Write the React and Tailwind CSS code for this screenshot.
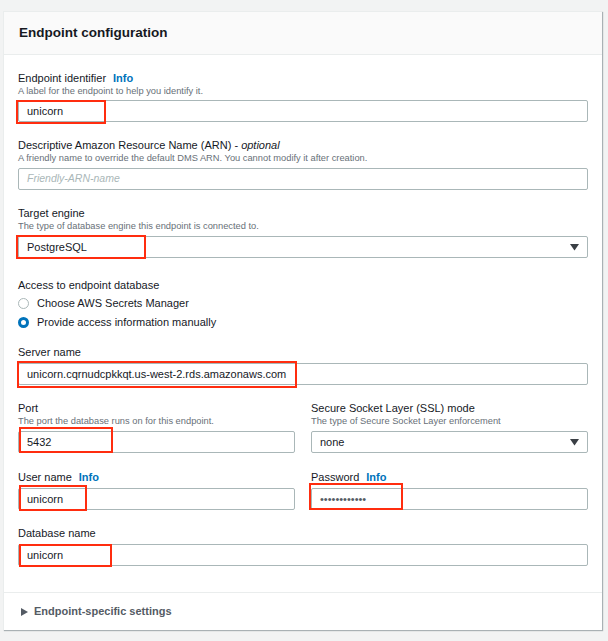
const font = "font-['Liberation_Sans',Arial,sans-serif]";

function Label({ children, info }) {
  return (
    <div className="h-[14px] leading-[14px] text-[11px] text-[#16191f]">
      {children}
      {info && <span className="ml-[7px] font-bold text-[#0073bb]">Info</span>}
    </div>
  );
}

function Desc({ children }) {
  return <div className="h-[12px] leading-[12px] text-[9.3px] text-[#687078] whitespace-nowrap">{children}</div>;
}

function Input({ value, placeholder, italic, red, select, dots, tight }) {
  return (
    <div className={`relative ${tight ? 'mt-[3px]' : 'mt-[4px]'} h-[22px] border border-[#aab7b8] rounded-[2px] bg-white flex items-center px-[8px]`}>
      {value ? (
        <span className={`text-[11px] ${dots ? 'text-[#545b64]' : 'text-[#16191f]'}`}>{value}</span>
      ) : (
        <span className={`text-[10.5px] text-[#aab7b8] ${italic ? 'italic' : ''}`}>{placeholder}</span>
      )}
      {select && (
        <svg className="ml-auto" width="9" height="7" viewBox="0 0 9 7">
          <polygon points="0,0 9,0 4.5,6.5" fill="#3a3f45" />
        </svg>
      )}
      {red && <div className={`absolute border-2 border-[#ff2d0f] ${red}`} />}
    </div>
  );
}

function Radio({ checked, children }) {
  return (
    <div className="h-[19px] flex items-center gap-[8px]">
      {checked ? (
        <div className="w-[11px] h-[11px] rounded-full border-[3px] border-[#0073bb] bg-white" />
      ) : (
        <div className="w-[11px] h-[11px] rounded-full border border-[#aab7b8] bg-white" />
      )}
      <span className="text-[11px] text-[#16191f]">{children}</span>
    </div>
  );
}

export default function App() {
  return (
    <div className={`${font} min-h-[641px] bg-[#f2f3f3] pt-[11px]`}>
      <div className="ml-[3px] w-[599px] bg-white border-t border-l border-[#eaeded] shadow-[1px_1px_1px_rgba(0,28,36,0.3)]">
        {/* Header */}
        <div className="h-[43px] bg-[#fafafa] border-b border-[#eaeded] flex items-center pl-[15px]">
          <h2 className="text-[13.5px] font-bold text-[#16191f]">Endpoint configuration</h2>
        </div>

        <div className="px-[14px] pt-[16px] pb-[26px]">
          <Label info>Endpoint identifier</Label>
          <Desc>A label for the endpoint to help you identify it.</Desc>
          <Input value="unicorn" tight red="-left-[3px] -top-[1px] w-[90px] h-[24px]" />

          <div className="mt-[16px]">
            <Label>
              Descriptive Amazon Resource Name (ARN) - <span className="italic">optional</span>
            </Label>
            <Desc>A friendly name to override the default DMS ARN. You cannot modify it after creation.</Desc>
            <Input placeholder="Friendly-ARN-name" italic />
          </div>

          <div className="mt-[16px]">
            <Label>Target engine</Label>
            <Desc>The type of database engine this endpoint is connected to.</Desc>
            <Input value="PostgreSQL" select red="-left-[3px] -top-[2px] w-[130px] h-[24px]" />
          </div>

          <div className="mt-[20px]">
            <Label>Access to endpoint database</Label>
            <div className="mt-[2px]">
              <Radio>Choose AWS Secrets Manager</Radio>
              <Radio checked>Provide access information manually</Radio>
            </div>
          </div>

          <div className="mt-[13px]">
            <Label>Server name</Label>
            <Input value="unicorn.cqrnudcpkkqt.us-west-2.rds.amazonaws.com" red="-left-[2px] -top-[3px] w-[280px] h-[27px]" />
          </div>

          <div className="mt-[16px] grid grid-cols-2 gap-x-[16px]">
            <div>
              <Label>Port</Label>
              <Desc>The port the database runs on for this endpoint.</Desc>
              <Input value="5432" red="left-0 -top-[5px] w-[94px] h-[26px]" />
            </div>
            <div>
              <Label>Secure Socket Layer (SSL) mode</Label>
              <Desc>The type of Secure Socket Layer enforcement</Desc>
              <Input value="none" select />
            </div>
          </div>

          <div className="mt-[17px] grid grid-cols-2 gap-x-[16px]">
            <div>
              <Label info>User name</Label>
              <Input value="unicorn" red="left-0 -top-[4px] w-[68px] h-[26px]" />
            </div>
            <div>
              <Label info>Password</Label>
              <Input value="••••••••••••" dots red="-left-[3px] -top-[6px] w-[94px] h-[27px]" />
            </div>
          </div>

          <div className="mt-[16px]">
            <Label>Database name</Label>
            <Input value="unicorn" red="left-0 -top-[1px] w-[93px] h-[23px]" />
          </div>
        </div>

        {/* Footer */}
        <div className="h-[38px] border-t border-[#eaeded] flex items-center pl-[17px]">
          <svg width="7" height="8" viewBox="0 0 7 8">
            <polygon points="0,0 7,4 0,8" fill="#545b64" />
          </svg>
          <span className="ml-[6px] text-[11px] font-bold text-[#545b64]">Endpoint-specific settings</span>
        </div>
      </div>
    </div>
  );
}
